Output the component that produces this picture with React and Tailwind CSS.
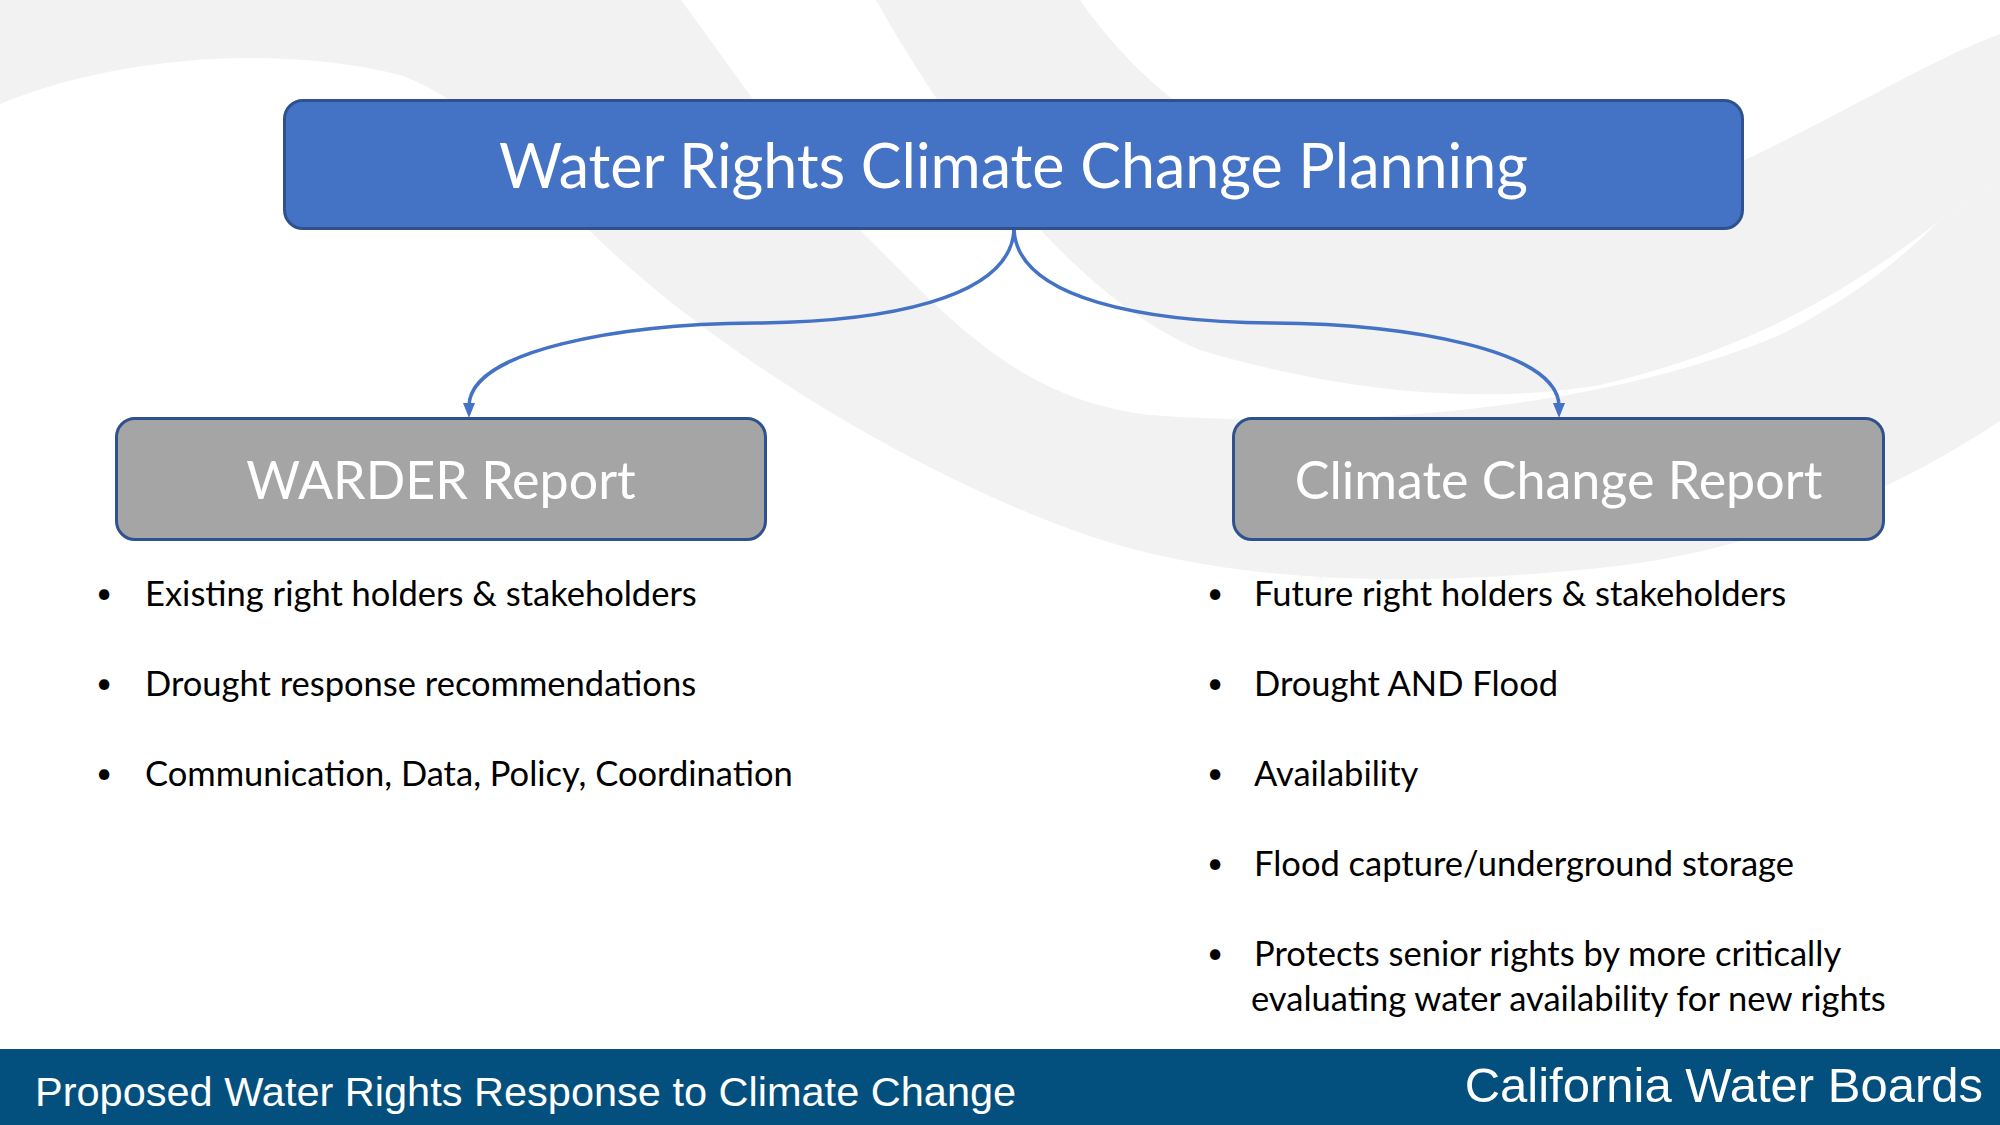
import React from "react";

const leftItems = [
  ["Existing right holders & stakeholders"],
  ["Drought response recommendations"],
  ["Communication, Data, Policy, Coordination"],
];

const rightItems = [
  ["Future right holders & stakeholders"],
  ["Drought AND Flood"],
  ["Availability"],
  ["Flood capture/underground storage"],
  ["Protects senior rights by more critically", "evaluating water availability for new rights"],
];

const Waves = () => (
  <svg className="absolute inset-0" width="2000" height="1125" viewBox="0 0 2000 1125">
    <path
      fill="#f2f2f2"
      d="M0 0 L681 0 C740 80 800 170 860 230 C950 320 1020 400 1150 415 C1350 430 1600 410 1780 335 C1850 300 1900 260 1938 222 L2000 180 L2000 421 C1880 500 1750 550 1617 566 C1450 585 1250 590 1089 536 C900 470 700 340 589 230 C520 160 470 100 400 75 C280 45 120 55 0 104 Z"
    />
    <path
      fill="#f2f2f2"
      d="M876 0 L1080 0 C1150 100 1250 170 1400 195 C1550 215 1700 185 1743 161 C1850 110 1930 60 2000 34 L2000 180 L1938 222 C1850 290 1750 350 1600 385 C1450 410 1300 380 1200 350 C1080 300 960 150 876 0 Z"
    />
  </svg>
);

const Connectors = () => (
  <svg className="absolute inset-0" width="2000" height="1049" viewBox="0 0 2000 1049">
    <g fill="none" stroke="#4472c4" strokeWidth="3.5">
      <path d="M1014 230 C1010 300 880 322 756 323 C620 324 470 350 469 406" />
      <path d="M1014 230 C1018 300 1148 322 1272 323 C1408 324 1558 350 1559 406" />
    </g>
    <g fill="#4472c4">
      <path d="M463 403 L475 403 L469 418 Z" />
      <path d="M1553 403 L1565 403 L1559 418 Z" />
    </g>
  </svg>
);

const BulletList = ({ items, offset, indent }) => (
  <ul className={`mt-[29px] ${offset} space-y-[45px] text-[34.5px] leading-[45px] text-black`}>
    {items.map((lines) => (
      <li key={lines[0]} className="flex">
        <span className={`${indent} shrink-0 text-[28px]`}>•</span>
        <span className="whitespace-nowrap">
          {lines.map((line, i) => (
            <span key={line} className={i > 0 ? "-ml-[3px] block" : "block"}>
              {line}
            </span>
          ))}
        </span>
      </li>
    ))}
  </ul>
);

export default function App() {
  return (
    <div
      className="relative flex h-[1125px] w-[2000px] flex-col overflow-hidden bg-white"
      style={{ fontFamily: "Lato, 'Open Sans', sans-serif" }}
    >
      <Waves />

      <main className="relative h-[1049px] shrink-0">
        <Connectors />

        <div className="relative pl-[283px] pt-[99px]">
          <div className="flex h-[131px] w-[1461px] items-center justify-center rounded-[20px] border-[3px] border-[#2f528f] bg-[#4472c4] text-[61px] text-white">
            Water Rights Climate Change Planning
          </div>
        </div>

        <div className="relative mt-[187px] flex gap-[465px] pl-[115px]">
          <div className="w-[652px]">
            <div className="flex h-[124px] items-center justify-center rounded-[20px] border-[3px] border-[#2f528f] bg-[#a5a5a5] text-[52px] text-white">
              WARDER Report
            </div>
            <BulletList items={leftItems} offset="-ml-[19px]" indent="w-[49px]" />
          </div>

          <div className="w-[653px]">
            <div className="flex h-[124px] items-center justify-center rounded-[20px] border-[3px] border-[#2f528f] bg-[#a5a5a5] text-[52px] text-white">
              Climate Change Report
            </div>
            <BulletList items={rightItems} offset="-ml-[25px]" indent="w-[47px]" />
          </div>
        </div>
      </main>

      <footer
        className="relative flex h-[76px] shrink-0 items-start justify-between bg-[#03507e] pl-[35px] pr-[17px] leading-none text-white"
        style={{ fontFamily: "'Liberation Sans', Arial, sans-serif" }}
      >
        <span className="mt-[22px] text-[41.5px]">Proposed Water Rights Response to Climate Change</span>
        <span className="mt-[12px] text-[49px]">California Water Boards</span>
      </footer>
    </div>
  );
}
